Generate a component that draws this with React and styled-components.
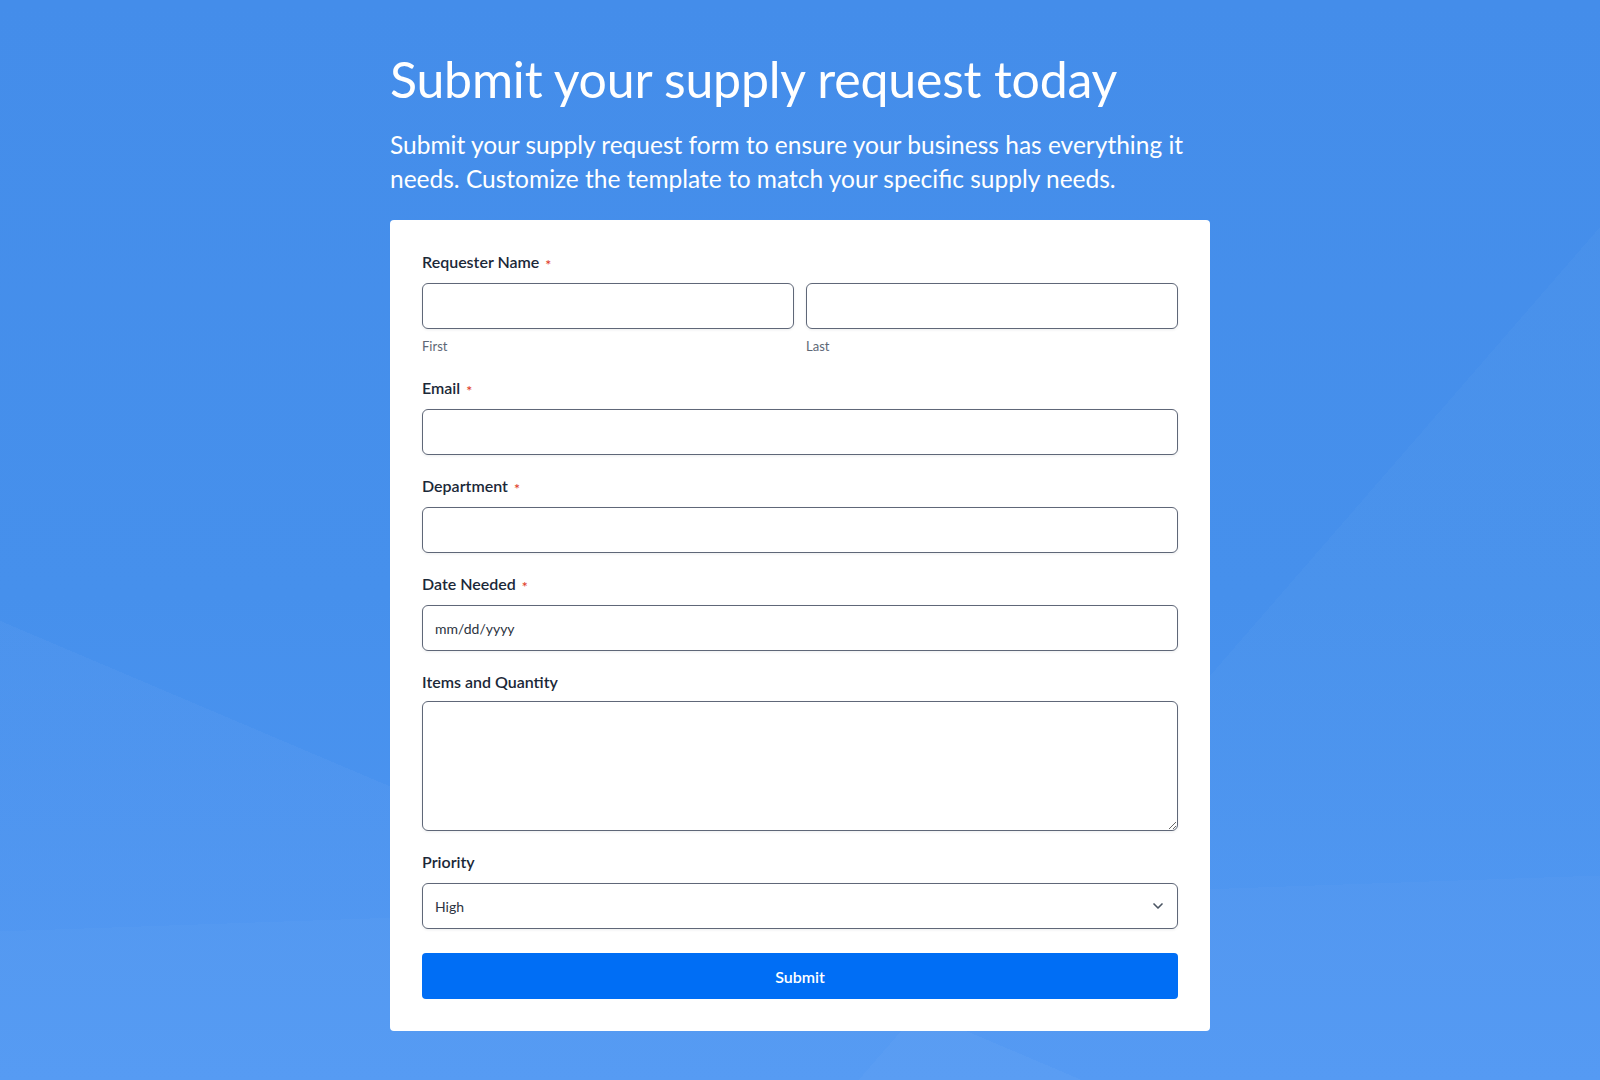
import React, { useState } from 'react';
import styled, { createGlobalStyle } from 'styled-components';
import { ChevronDown } from 'lucide-react';

const GlobalStyle = createGlobalStyle`
  html, body {
    margin: 0;
    padding: 0;
  }
  body {
    font-family: "Lato", "Noto Sans", sans-serif;
    background: #4690ec;
  }
  * {
    box-sizing: border-box;
  }
`;

// the faint facets of the backdrop are hard stops in the gradients
const Page = styled.div`
  min-height: 1080px;
  padding: 46px 0 49px;
  background:
    linear-gradient(203deg, rgba(255, 255, 255, 0) 73.9%, rgba(255, 255, 255, 0.03) 73.9%),
    linear-gradient(131deg, rgba(255, 255, 255, 0) 70.8%, rgba(255, 255, 255, 0.025) 70.8%),
    linear-gradient(178deg, rgba(255, 255, 255, 0) 82%, rgba(255, 255, 255, 0.02) 82%),
    linear-gradient(180deg, #448dea 0%, #4690ec 55%, #4e96f3 100%);
`;

const Column = styled.div`
  width: 820px;
  margin: 0 auto;
`;

const Title = styled.h1`
  margin: 0;
  font-family: "Lato", "Noto Sans", sans-serif;
  font-weight: 400;
  font-size: 50px;
  line-height: 66px;
  color: #ffffff;
  letter-spacing: -0.2px;
`;

const Lead = styled.p`
  margin: 16px 0 24px;
  font-family: "Lato", "Noto Sans", sans-serif;
  font-size: 24.5px;
  line-height: 34px;
  color: #ffffff;
`;

const Card = styled.form`
  background: #ffffff;
  border-radius: 4px;
  padding: 32px;
  display: flex;
  flex-direction: column;
  gap: 21px;
`;

const Field = styled.div`
  display: flex;
  flex-direction: column;
`;

const Label = styled.label`
  display: flex;
  align-items: center;
  font-size: 16px;
  font-weight: 600;
  line-height: 20px;
  color: #1b2838;
  margin-bottom: ${(p) => (p.$tight ? '9px' : '11px')};
`;

const Star = styled.span`
  color: #e0402b;
  font-size: 14px;
  line-height: 14px;
  padding-top: 5px;
  margin-left: 6px;
`;

const Split = styled.div`
  display: grid;
  grid-template-columns: 1fr 1fr;
  gap: 12px;
`;

const Part = styled.div`
  display: flex;
  flex-direction: column;
`;

const Hint = styled.span`
  margin: 9px 0 3px;
  font-size: 13px;
  line-height: 16px;
  color: #5d6776;
`;

const Input = styled.input`
  width: 100%;
  height: 46px;
  padding: 0 12px;
  border: 1px solid #5f6778;
  border-radius: 6px;
  background: #ffffff;
  box-shadow: 0 1px 3px rgba(16, 24, 40, 0.08);
  font-family: "Lato", "Noto Sans", sans-serif;
  font-size: 14px;
  color: #1b2838;
  outline: none;

  &::placeholder {
    color: #2b3340;
  }
`;

const Area = styled.textarea`
  width: 100%;
  height: 130px;
  padding: 12px;
  border: 1px solid #5f6778;
  border-radius: 6px;
  box-shadow: 0 1px 3px rgba(16, 24, 40, 0.08);
  font-family: "Lato", "Noto Sans", sans-serif;
  font-size: 14px;
  outline: none;
  display: block;
`;

const SelectWrap = styled.div`
  position: relative;
`;

const Select = styled.select`
  width: 100%;
  height: 46px;
  padding: 0 40px 0 12px;
  border: 1px solid #5f6778;
  border-radius: 6px;
  background: #ffffff;
  box-shadow: 0 1px 3px rgba(16, 24, 40, 0.08);
  appearance: none;
  font-family: "Lato", "Noto Sans", sans-serif;
  font-size: 14px;
  color: #2b3340;
  outline: none;
`;

const Caret = styled.span`
  position: absolute;
  right: 12px;
  top: 50%;
  transform: translateY(-50%);
  display: flex;
  color: #4b5563;
  pointer-events: none;
`;

const Button = styled.button`
  height: 46px;
  margin-top: 3px;
  border: none;
  border-radius: 4px;
  background: #006ef5;
  color: #ffffff;
  font-family: "Lato", "Noto Sans", sans-serif;
  font-size: 16px;
  font-weight: 600;
  cursor: pointer;
`;

const App = () => {
  const [data, setData] = useState({ priority: 'High' });

  const handleChange = (e) => {
    setData({ ...data, [e.target.name]: e.target.value });
  };

  return (
    <Page>
      <GlobalStyle />
      <Column>
        <Title>Submit your supply request today</Title>
        <Lead>
          Submit your supply request form to ensure your business has everything it
          needs. Customize the template to match your specific supply needs.
        </Lead>
        <Card onSubmit={(e) => e.preventDefault()}>
          <Field>
            <Label>Requester Name<Star>*</Star></Label>
            <Split>
              <Part>
                <Input name="first" value={data.first || ''} onChange={handleChange} />
                <Hint>First</Hint>
              </Part>
              <Part>
                <Input name="last" value={data.last || ''} onChange={handleChange} />
                <Hint>Last</Hint>
              </Part>
            </Split>
          </Field>

          <Field>
            <Label>Email<Star>*</Star></Label>
            <Input name="email" type="email" value={data.email || ''} onChange={handleChange} />
          </Field>

          <Field>
            <Label>Department<Star>*</Star></Label>
            <Input name="department" value={data.department || ''} onChange={handleChange} />
          </Field>

          <Field>
            <Label>Date Needed<Star>*</Star></Label>
            <Input name="date" placeholder="mm/dd/yyyy" value={data.date || ''} onChange={handleChange} />
          </Field>

          <Field>
            <Label $tight>Items and Quantity</Label>
            <Area name="items" value={data.items || ''} onChange={handleChange} />
          </Field>

          <Field>
            <Label>Priority</Label>
            <SelectWrap>
              <Select name="priority" value={data.priority} onChange={handleChange}>
                <option>High</option>
                <option>Medium</option>
                <option>Low</option>
              </Select>
              <Caret><ChevronDown size={16} strokeWidth={2.5} /></Caret>
            </SelectWrap>
          </Field>

          <Button type="submit">Submit</Button>
        </Card>
      </Column>
    </Page>
  );
};

export default App;
